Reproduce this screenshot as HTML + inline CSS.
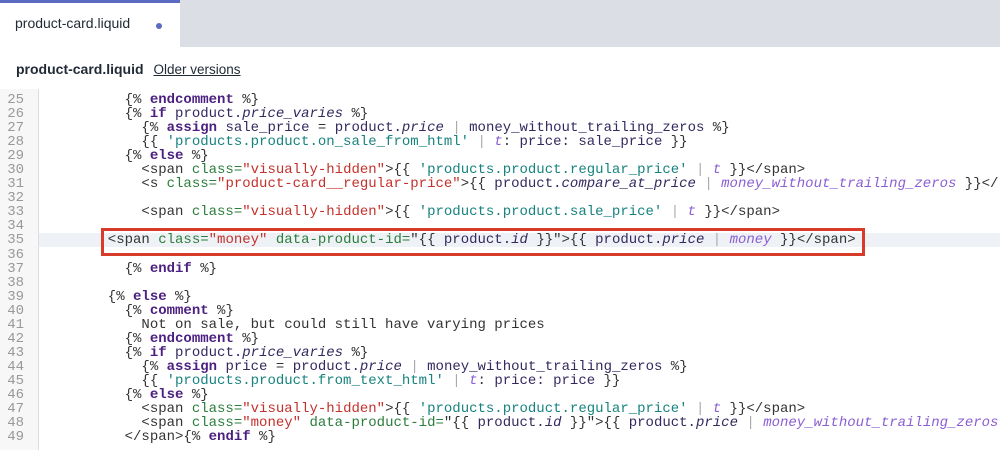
<!DOCTYPE html>
<html><head><style>
body{margin:0;width:1000px;height:450px;overflow:hidden;background:#fff;font-family:"Liberation Sans",sans-serif;position:relative}
.topbar{position:absolute;left:0;top:0;width:1000px;height:47px;background:#dbdee5}
.tab{position:absolute;left:0;top:0;width:180px;height:47px;background:#fff;border-top:3px solid #5c6ac4;box-sizing:border-box}
.tab span{position:absolute;left:15px;top:12px;font-size:14px;color:#212b36}
.dot{position:absolute;left:156px;top:20px;width:6px;height:6px;border-radius:50%;background:#5c6ac4}
.hdr{position:absolute;left:16px;top:61px;font-size:14px;color:#212b36}
.hdr b{font-weight:bold;margin-right:6px}
.hdr u{font-size:13.5px}
.gut{position:absolute;left:0;top:89px;width:38px;height:361px;background:#f7f7f7;border-right:1px solid #ddd}
.hl{position:absolute;left:39px;top:233px;width:961px;height:14px;background:#eef1f5}
.box{position:absolute;left:101px;top:228px;width:758px;height:22px;border:3px solid #d83b2a}
pre{margin:0;position:absolute;top:93px;font-family:"Liberation Mono",monospace;font-size:14px;line-height:14.05px;color:#333}
.nums{left:0;width:24px;text-align:right;color:#999}
.code{left:49px;white-space:pre}
.k{color:#4a1f80;font-weight:bold}
.v{color:#35285f}
.i{font-style:italic}
.f{color:#8a5fd3;font-style:italic}
.s{color:#17837f}
.a{color:#2b7d3c}
.r{color:#c4302b}
.p{color:#aaa}
</style></head><body>
<div class="topbar"></div>
<div class="tab"><span>product-card.liquid</span><div class="dot"></div></div>
<div class="hdr"><b>product-card.liquid</b> <u>Older versions</u></div>
<div class="gut"></div>
<div class="hl"></div>
<pre class="nums">25
26
27
28
29
30
31
32
33
34
35
36
37
38
39
40
41
42
43
44
45
46
47
48
49</pre>
<pre class="code">         {% <span class="k">endcomment</span> %}
         {% <span class="k">if</span> <span class="v">product.<i>price_varies</i></span> %}
           {% <span class="k">assign</span> <span class="v">sale_price</span> = <span class="v">product.<i>price</i></span> <span class="p">|</span> <span class="v">money_without_trailing_zeros</span> %}
           {{ <span class="s">'products.product.on_sale_from_html'</span> <span class="p">|</span> <span class="f">t</span>: <span class="v">price: sale_price</span> }}
         {% <span class="k">else</span> %}
           &lt;span <span class="a">class=</span><span class="r">"visually-hidden"</span>&gt;{{ <span class="s">'products.product.regular_price'</span> <span class="p">|</span> <span class="f">t</span> }}&lt;/span&gt;
           &lt;s <span class="a">class=</span><span class="r">"product-card__regular-price"</span>&gt;{{ <span class="v">product.<i>compare_at_price</i></span> <span class="p">|</span> <span class="f">money_without_trailing_zeros</span> }}&lt;/

           &lt;span <span class="a">class=</span><span class="r">"visually-hidden"</span>&gt;{{ <span class="s">'products.product.sale_price'</span> <span class="p">|</span> <span class="f">t</span> }}&lt;/span&gt;

       &lt;span <span class="a">class=</span><span class="r">"money"</span> <span class="a">data-product-id=</span>"{{ <span class="v">product.<i>id</i></span> }}"&gt;{{ <span class="v">product.<i>price</i></span> <span class="p">|</span> <span class="f">money</span> }}&lt;/span&gt;

         {% <span class="k">endif</span> %}

       {% <span class="k">else</span> %}
         {% <span class="k">comment</span> %}
           Not on sale, but could still have varying prices
         {% <span class="k">endcomment</span> %}
         {% <span class="k">if</span> <span class="v">product.<i>price_varies</i></span> %}
           {% <span class="k">assign</span> <span class="v">price</span> = <span class="v">product.<i>price</i></span> <span class="p">|</span> <span class="v">money_without_trailing_zeros</span> %}
           {{ <span class="s">'products.product.from_text_html'</span> <span class="p">|</span> <span class="f">t</span>: <span class="v">price: price</span> }}
         {% <span class="k">else</span> %}
           &lt;span <span class="a">class=</span><span class="r">"visually-hidden"</span>&gt;{{ <span class="s">'products.product.regular_price'</span> <span class="p">|</span> <span class="f">t</span> }}&lt;/span&gt;
           &lt;span <span class="a">class=</span><span class="r">"money"</span> <span class="a">data-product-id=</span>"{{ <span class="v">product.<i>id</i></span> }}"&gt;{{ <span class="v">product.<i>price</i></span> <span class="p">|</span> <span class="f">money_without_trailing_zeros</span>
         &lt;/span&gt;{% <span class="k">endif</span> %}</pre>
<div class="box"></div>
</body></html>
